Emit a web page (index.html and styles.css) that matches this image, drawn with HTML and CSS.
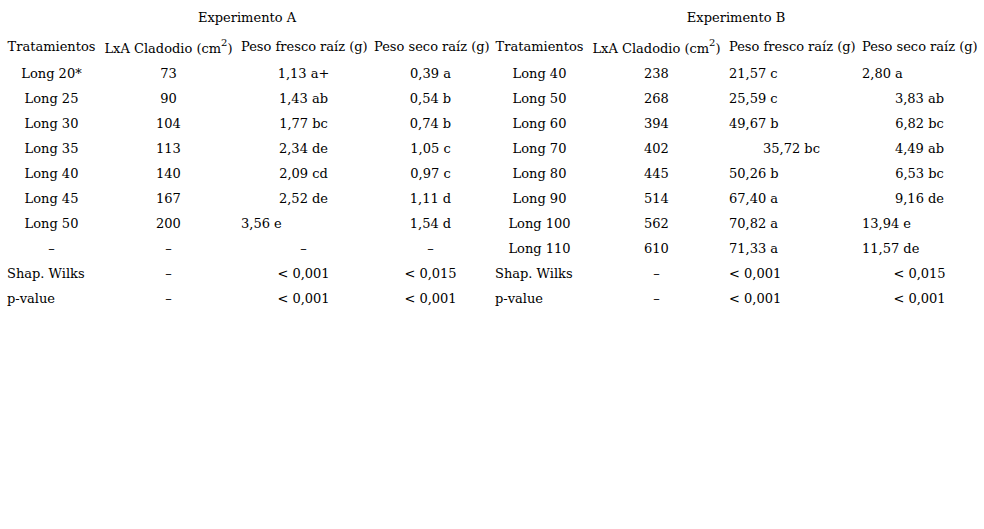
FILE: index.html
```html
<!DOCTYPE html>
<html lang="es">
<head>
<meta charset="utf-8">
<title>Experimentos</title>
<link rel="stylesheet" href="styles.css">
</head>
<body>
<table class="results">
  <colgroup>
    <col class="c-trat"><col class="c-lxa"><col class="c-fresco"><col class="c-seco">
    <col class="c-trat"><col class="c-lxa"><col class="c-fresco"><col class="c-seco-b">
  </colgroup>
  <tr class="title">
    <td colspan="4">Experimento A</td>
    <td colspan="4">Experimento B</td>
  </tr>
  <tr class="head">
    <td>Tratamientos</td><td>LxA Cladodio (cm<sup>2</sup>)</td><td>Peso fresco raíz (g)</td><td>Peso seco raíz (g)</td>
    <td>Tratamientos</td><td>LxA Cladodio (cm<sup>2</sup>)</td><td>Peso fresco raíz (g)</td><td>Peso seco raíz (g)</td>
  </tr>
  <tr>
    <td>Long 20*</td><td>73</td><td>1,13 a+</td><td>0,39 a</td>
    <td>Long 40</td><td>238</td><td class="l">21,57 c</td><td class="l">2,80 a</td>
  </tr>
  <tr>
    <td>Long 25</td><td>90</td><td>1,43 ab</td><td>0,54 b</td>
    <td>Long 50</td><td>268</td><td class="l">25,59 c</td><td>3,83 ab</td>
  </tr>
  <tr>
    <td>Long 30</td><td>104</td><td>1,77 bc</td><td>0,74 b</td>
    <td>Long 60</td><td>394</td><td class="l">49,67 b</td><td>6,82 bc</td>
  </tr>
  <tr>
    <td>Long 35</td><td>113</td><td>2,34 de</td><td>1,05 c</td>
    <td>Long 70</td><td>402</td><td>35,72 bc</td><td>4,49 ab</td>
  </tr>
  <tr>
    <td>Long 40</td><td>140</td><td>2,09 cd</td><td>0,97 c</td>
    <td>Long 80</td><td>445</td><td class="l">50,26 b</td><td>6,53 bc</td>
  </tr>
  <tr>
    <td>Long 45</td><td>167</td><td>2,52 de</td><td>1,11 d</td>
    <td>Long 90</td><td>514</td><td class="l">67,40 a</td><td>9,16 de</td>
  </tr>
  <tr>
    <td>Long 50</td><td>200</td><td class="l">3,56 e</td><td>1,54 d</td>
    <td>Long 100</td><td>562</td><td class="l">70,82 a</td><td class="l">13,94 e</td>
  </tr>
  <tr>
    <td>–</td><td>–</td><td>–</td><td>–</td>
    <td>Long 110</td><td>610</td><td class="l">71,33 a</td><td class="l">11,57 de</td>
  </tr>
  <tr>
    <td class="l">Shap. Wilks</td><td>–</td><td>&lt; 0,001</td><td>&lt; 0,015</td>
    <td class="l">Shap. Wilks</td><td>–</td><td class="l">&lt; 0,001</td><td>&lt; 0,015</td>
  </tr>
  <tr>
    <td class="l">p-value</td><td>–</td><td>&lt; 0,001</td><td>&lt; 0,001</td>
    <td class="l">p-value</td><td>–</td><td class="l">&lt; 0,001</td><td>&lt; 0,001</td>
  </tr>
</table>
</body>
</html>
```
FILE: styles.css
```css
html, body {
  margin: 0;
  padding: 0;
  background: #fff;
}
body {
  padding: 3px 0 0 3px;
  font-family: "DejaVu Serif", serif;
  font-size: 13px;
  color: #000;
}
.results {
  border-collapse: collapse;
  border-spacing: 0;
  table-layout: fixed;
  width: 978px;
}
.c-trat { width: 97px; }
.c-lxa { width: 137px; }
.c-fresco { width: 133px; }
.c-seco { width: 121px; }
.c-seco-b { width: 123px; }
.results td {
  padding: 0 4px;
  height: 25px;
  text-align: center;
  vertical-align: middle;
  white-space: nowrap;
  line-height: 15px;
}
.results tr.title td {
  height: 29px;
}
.results tr.head td {
  height: 29px;
}
.results sup {
  font-size: 10px;
  line-height: 10px;
  vertical-align: 7px;
}
.results td.l {
  text-align: left;
}
```
